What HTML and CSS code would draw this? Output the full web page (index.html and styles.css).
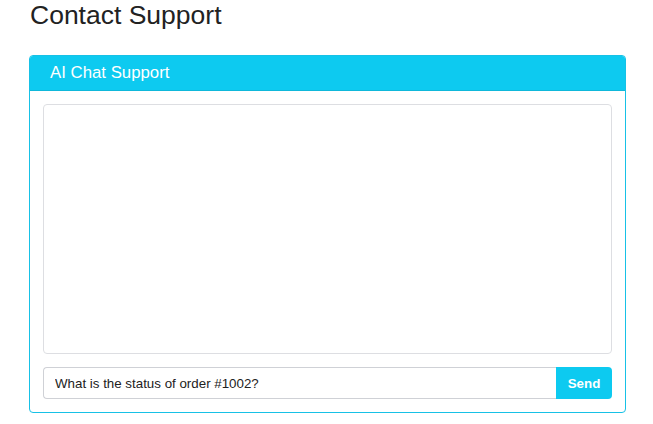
FILE: index.html
```html
<!DOCTYPE html>
<html>
<head>
<meta charset="utf-8">
<link rel="stylesheet" href="styles.css">
</head>
<body>
<div class="page">
  <h1 class="title">Contact Support</h1>
  <div class="panel">
    <div class="panel-head">AI Chat Support</div>
    <div class="panel-body">
      <div class="chat-log"></div>
      <div class="input-row">
        <input class="chat-input" type="text" value="What is the status of order #1002?">
        <button class="send-btn">Send</button>
      </div>
    </div>
  </div>
</div>
</body>
</html>
```
FILE: styles.css
```css
html, body {
  margin: 0;
  padding: 0;
  background: #fff;
  font-family: "Liberation Sans", Arial, sans-serif;
}
.page {
  padding: 0 27px 0 29px;
}
.title {
  margin: 0 0 25px 1px;
  font-size: 26.5px;
  font-weight: normal;
  line-height: 30px;
  color: #222;
}
.panel {
  width: 597px;
  box-sizing: border-box;
  border: 1px solid #17c1e6;
  border-radius: 4px;
  overflow: hidden;
}
.panel-head {
  height: 35px;
  box-sizing: border-box;
  background: #0dcaf0;
  border-bottom: 1px solid #0fb8da;
  color: #fff;
  font-size: 16.8px;
  line-height: 34px;
  padding-left: 20px;
}
.panel-body {
  padding: 13px;
  display: flex;
  flex-direction: column;
  gap: 13px;
}
.chat-log {
  height: 250px;
  box-sizing: border-box;
  border: 1px solid #dddee2;
  border-radius: 4px;
}
.input-row {
  display: flex;
  height: 32px;
}
.chat-input {
  flex: 1;
  min-width: 0;
  box-sizing: border-box;
  height: 32px;
  margin: 0;
  border: 1px solid #cfd1d6;
  border-right: none;
  border-radius: 4px 0 0 4px;
  padding: 0 11px;
  font-family: "Liberation Sans", Arial, sans-serif;
  font-size: 13.33px;
  color: #222;
  outline: none;
}
.send-btn {
  width: 56px;
  height: 32px;
  margin: 0;
  border: none;
  border-radius: 0 4px 4px 0;
  background: #0dcaf0;
  color: #fff;
  font-family: "Liberation Sans", Arial, sans-serif;
  font-size: 13.33px;
  font-weight: bold;
  padding: 0;
}
```
